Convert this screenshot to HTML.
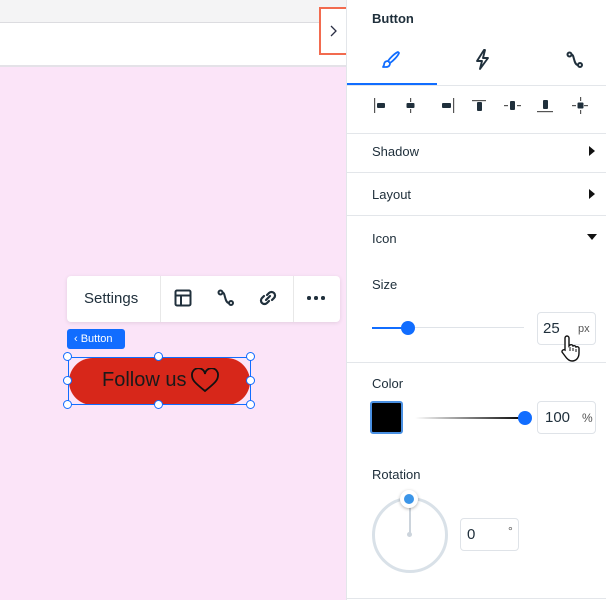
<!DOCTYPE html>
<html><head><meta charset="utf-8"><style>
*{margin:0;padding:0;box-sizing:border-box}
body{width:606px;height:600px;overflow:hidden;font-family:"Liberation Sans",sans-serif;background:#fbe4f8;position:relative;color:#20303c}
.a{position:absolute}
.hr{position:absolute;left:346px;width:260px;height:1px;background:#e3e6ea}
.t{font-size:13px;color:#20303c}
.h{position:absolute;width:9px;height:9px;border:1.5px solid #116dff;border-radius:50%;background:#fff}
.box{position:absolute;border:1px solid #dfe3e8;border-radius:4px;background:#fff;font-size:15px}
</style></head><body>
<div class="a" style="left:0;top:0;width:346px;height:22px;background:#f4f4f5"></div>
<div class="a" style="left:0;top:22px;width:346px;height:45px;background:#fff;border-top:1px solid #dcdce0;border-bottom:2px solid #e4e2e8"></div>
<div class="a" style="left:319px;top:7px;width:30px;height:48px;border:2px solid #f26b4f;background:#fff"></div>
<svg class="a" style="left:328px;top:24px" width="10" height="14"><path d="M3 2l5 5-5 5" fill="none" stroke="#2b2f45" stroke-width="1.3"/></svg>

<div class="a" style="left:67px;top:276px;width:273px;height:46px;background:#fff;border-radius:4px;box-shadow:0 1px 4px rgba(0,0,0,.1)"></div>
<div class="a" style="left:160px;top:276px;width:1px;height:46px;background:#e8e8e8"></div>
<div class="a" style="left:293px;top:276px;width:1px;height:46px;background:#e8e8e8"></div>
<div class="a" style="left:84px;top:290px;font-size:15px;color:#20303c">Settings</div>
<svg class="a" style="left:174px;top:289px" width="18" height="18"><rect x="1.5" y="1.5" width="15" height="15" rx="1.5" fill="none" stroke="#20303c" stroke-width="2"/><path d="M1.5 6.5h15M7 6.5v10" stroke="#20303c" stroke-width="2"/></svg>
<svg class="a" style="left:217px;top:289px" width="18" height="18"><circle cx="3.5" cy="3.5" r="2" fill="none" stroke="#20303c" stroke-width="2"/><circle cx="14" cy="14" r="2" fill="none" stroke="#20303c" stroke-width="2"/><path d="M5.5 3.5c3 0 2 10.5 6.5 10.5" fill="none" stroke="#20303c" stroke-width="2"/></svg>
<svg class="a" style="left:259px;top:289px" width="18" height="18"><path d="M8 6l2-2a3.5 3.5 0 015 5l-2 2M10 12l-2 2a3.5 3.5 0 01-5-5l2-2M7 11l4-4" fill="none" stroke="#20303c" stroke-width="2.2" stroke-linecap="round"/></svg>
<div class="a" style="left:307px;top:296px;width:20px;height:4px">
<span class="a" style="left:0;width:3.5px;height:3.5px;border-radius:50%;background:#20303c"></span>
<span class="a" style="left:7px;width:3.5px;height:3.5px;border-radius:50%;background:#20303c"></span>
<span class="a" style="left:14px;width:3.5px;height:3.5px;border-radius:50%;background:#20303c"></span></div>

<div class="a" style="left:67px;top:329px;width:58px;height:20px;background:#116dff;border-radius:3px;color:#fff;font-size:11px;line-height:20px;padding-left:7px">‹ Button</div>

<div class="a" style="left:69px;top:358px;width:181px;height:47px;background:#d7271a;border-radius:24px"></div>
<div class="a" style="left:68px;top:357px;width:183px;height:48px;border:1.5px solid #116dff"></div>
<div class="a" style="left:102px;top:369px;font-size:20px;color:#1a1a1a">Follow us</div>
<svg class="a" style="left:190px;top:368px" width="30" height="26"><path d="M15 23C5 15 2 12 2 7.5a6 6 0 0113-1.5 6 6 0 0113 1.5c0 4.5-3 7.5-13 15.5z" fill="none" stroke="#111" stroke-width="1.8"/></svg>
<div class="h" style="left:63px;top:352px"></div><div class="h" style="left:154px;top:352px"></div><div class="h" style="left:246px;top:352px"></div>
<div class="h" style="left:63px;top:376px"></div><div class="h" style="left:246px;top:376px"></div>
<div class="h" style="left:63px;top:400px"></div><div class="h" style="left:154px;top:400px"></div><div class="h" style="left:246px;top:400px"></div>

<div class="a" style="left:346px;top:0;width:260px;height:600px;background:#fff;border-left:1px solid #e3e6ea"></div>
<div class="a" style="left:372px;top:11px;font-size:13px;font-weight:bold;color:#20303c">Button</div>
<svg class="a" style="left:381px;top:50px" width="20" height="20"><path d="M17 2c-3 1-8 6-10 9l2 2c3-2 8-7 9-10zM7 11c-3 0-4 2-4 4l-1 2h3c3 0 4-2 4-4" fill="none" stroke="#116dff" stroke-width="1.8" stroke-linejoin="round"/></svg>
<svg class="a" style="left:474px;top:49px" width="18" height="22"><path d="M10 1L3 12h5l-2 8 8-11H9l2-8z" fill="none" stroke="#20303c" stroke-width="1.9" stroke-linejoin="round"/></svg>
<svg class="a" style="left:566px;top:51px" width="18" height="18"><circle cx="3.5" cy="3.5" r="2" fill="none" stroke="#20303c" stroke-width="2"/><circle cx="14" cy="14" r="2" fill="none" stroke="#20303c" stroke-width="2"/><path d="M5.5 3.5c3 0 2 10.5 6.5 10.5" fill="none" stroke="#20303c" stroke-width="2"/></svg>
<div class="a" style="left:347px;top:83px;width:90px;height:2px;background:#116dff"></div>
<div class="hr" style="top:85px"></div>
<svg class="a" style="left:370px;top:95px" width="230" height="22" fill="#20303c">
<rect x="4" y="3" width="1.2" height="15" fill="#555"/><rect x="7" y="8" width="8" height="5" rx="1"/>
<rect x="40" y="3" width="1.2" height="4" fill="#555"/><rect x="40" y="14" width="1.2" height="4" fill="#555"/><rect x="36.5" y="8" width="8" height="5" rx="1"/>
<rect x="83" y="3" width="1.2" height="15" fill="#555"/><rect x="72" y="8" width="9" height="5" rx="1"/>
<rect x="102" y="5" width="14" height="1.2" fill="#555"/><rect x="107" y="7" width="5" height="9" rx="1"/>
<rect x="134" y="10" width="4" height="1.2" fill="#555"/><rect x="147" y="10" width="4" height="1.2" fill="#555"/><rect x="140" y="6" width="5" height="9" rx="1"/>
<rect x="167" y="16" width="16" height="1.2" fill="#555"/><rect x="173" y="5" width="5" height="9" rx="1"/>
<rect x="202" y="10" width="4" height="1.2" fill="#555"/><rect x="214" y="10" width="4" height="1.2" fill="#555"/><rect x="210" y="2" width="1.2" height="4" fill="#555"/><rect x="210" y="15" width="1.2" height="4" fill="#555"/><rect x="207.5" y="7.5" width="6" height="6" rx="1"/>
</svg>
<div class="hr" style="top:133px"></div>
<div class="a t" style="left:372px;top:144px">Shadow</div>
<svg class="a" style="left:588px;top:146px" width="8" height="10"><path d="M1 0l6 5-6 5z" fill="#111"/></svg>
<div class="hr" style="top:172px"></div>
<div class="a t" style="left:372px;top:187px">Layout</div>
<svg class="a" style="left:588px;top:189px" width="8" height="10"><path d="M1 0l6 5-6 5z" fill="#111"/></svg>
<div class="hr" style="top:215px"></div>
<div class="a t" style="left:372px;top:231px">Icon</div>
<svg class="a" style="left:587px;top:233px" width="10" height="8"><path d="M0 1h10L5 7z" fill="#111"/></svg>
<div class="a t" style="left:372px;top:277px">Size</div>
<div class="a" style="left:372px;top:327px;width:152px;height:1px;background:#dfe3e8"></div>
<div class="a" style="left:372px;top:327px;width:36px;height:1.5px;background:#116dff"></div>
<div class="a" style="left:401px;top:321px;width:14px;height:14px;border-radius:50%;background:#116dff"></div>
<div class="box" style="left:537px;top:312px;width:59px;height:33px"><span class="a" style="left:5px;top:7px">25</span><span class="a" style="left:40px;top:10px;font-size:11px;color:#555">px</span></div>
<svg class="a" style="left:559px;top:335px" width="22" height="28"><path d="M6 14V3a2 2 0 014 0v8l1-1a2 2 0 013 1 2 2 0 013 1 2 2 0 013 1v5c0 5-3 8-7 8-3 0-5-2-7-5l-3-4a2 2 0 013-2z" fill="#fff" stroke="#111" stroke-width="1.4"/><path d="M11 12v4M14 13v3M17 14v3" stroke="#111" stroke-width="1"/></svg>
<div class="hr" style="top:362px"></div>
<div class="a t" style="left:372px;top:376px">Color</div>
<div class="a" style="left:370px;top:401px;width:33px;height:33px;border:2px solid #4a90e2;border-radius:3px;background:#000"></div>
<div class="a" style="left:415px;top:417px;width:110px;height:2px;background:linear-gradient(90deg,#fff,#000)"></div>
<div class="a" style="left:518px;top:411px;width:14px;height:14px;border-radius:50%;background:#116dff"></div>
<div class="box" style="left:537px;top:401px;width:59px;height:33px"><span class="a" style="left:7px;top:7px">100</span><span class="a" style="left:44px;top:9px;font-size:12px;color:#555">%</span></div>
<div class="a t" style="left:372px;top:467px">Rotation</div>
<div class="a" style="left:372px;top:497px;width:76px;height:76px;border:3px solid #d9e1e8;border-radius:50%"></div>
<div class="a" style="left:409px;top:498px;width:1.5px;height:37px;background:#ccd4dc"></div>
<div class="a" style="left:407px;top:532px;width:5px;height:5px;border-radius:50%;background:#ccd4dc"></div>
<div class="a" style="left:400px;top:490px;width:18px;height:18px;border-radius:50%;background:#fff;box-shadow:0 1px 3px rgba(0,0,0,.3)"></div>
<div class="a" style="left:404px;top:494px;width:10px;height:10px;border-radius:50%;background:#3b95e8"></div>
<div class="box" style="left:460px;top:518px;width:59px;height:33px"><span class="a" style="left:6px;top:7px">0</span><span class="a" style="left:47px;top:5px;font-size:12px;color:#555">°</span></div>
<div class="hr" style="top:598px"></div>
</body></html>
